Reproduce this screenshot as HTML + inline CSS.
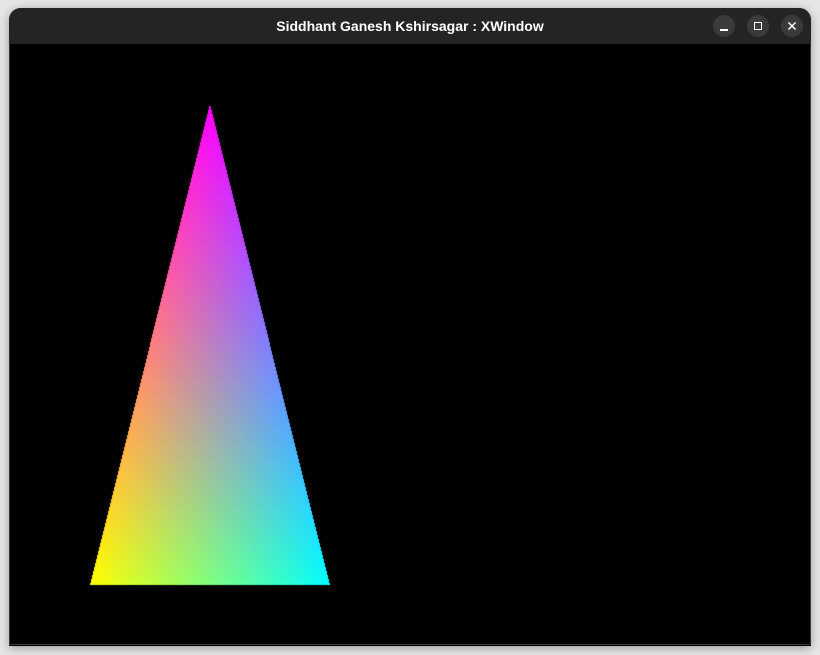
<!DOCTYPE html>
<html><head><meta charset="utf-8"><style>
html,body{margin:0;padding:0;width:820px;height:655px;background:#e6e6e6;overflow:hidden}
.win{position:absolute;left:9px;top:8px;width:802px;height:638px;background:#000;border-radius:12px 12px 0 0;box-shadow:0 2px 10px rgba(0,0,0,.35);overflow:hidden}
.tb{position:absolute;left:0;top:0;width:802px;height:36px;background:#242424;color:#fff;font:bold 14px "Liberation Sans",sans-serif;text-align:center;line-height:37px}
.b{position:absolute;top:7px;width:22px;height:22px;border-radius:50%;background:#3a3a3a}
.area{position:absolute;left:0;top:36px;width:800px;height:600px;border:1px solid #3a3a3a;border-top:none;background:#000}
canvas{position:absolute;left:0;top:0}
</style></head><body>
<div class="win">
<div class="tb">Siddhant Ganesh Kshirsagar : XWindow
<div class="b" style="left:704px"><div style="position:absolute;left:7px;top:14px;width:8px;height:1.5px;background:#fff"></div></div>
<div class="b" style="left:738px"><div style="position:absolute;left:7px;top:7px;width:6px;height:6px;border:1.3px solid #fff"></div></div>
<div class="b" style="left:772px"><svg width="22" height="22" style="position:absolute;left:0;top:0"><path d="M7.5 7.5L14.5 14.5M14.5 7.5L7.5 14.5" stroke="#fff" stroke-width="1.5"/></svg></div>
</div>
<div class="area"></div>
</div>
<canvas id="c" width="820" height="655"></canvas>
<script>
var c=document.getElementById('c').getContext('2d');
var A=[210,104],B=[90,585],C=[330,585];
var img=c.createImageData(820,655),d=img.data;
var den=(B[1]-C[1])*(A[0]-C[0])+(C[0]-B[0])*(A[1]-C[1]);
for(var y=100;y<590;y++)for(var x=85;x<335;x++){
var px=x+.5,py=y+.5;
var a=((B[1]-C[1])*(px-C[0])+(C[0]-B[0])*(py-C[1]))/den;
var b=((C[1]-A[1])*(px-C[0])+(A[0]-C[0])*(py-C[1]))/den;
var g=1-a-b;
if(a<0||b<0||g<0)continue;
var i=(y*820+x)*4;
d[i]=255*(a+b);d[i+1]=255*(b+g);d[i+2]=255*(a+g);d[i+3]=255;}
c.putImageData(img,0,0);
</script>
</body></html>
